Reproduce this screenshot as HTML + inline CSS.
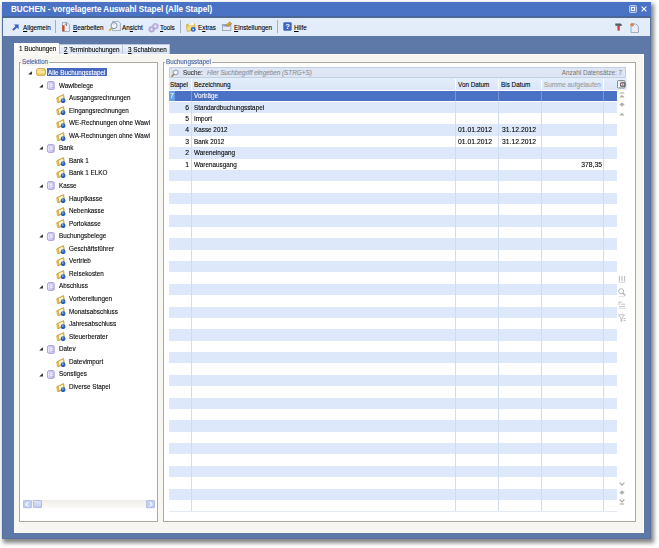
<!DOCTYPE html>
<html><head><meta charset="utf-8">
<style>
*{box-sizing:border-box;margin:0;padding:0}
html,body{width:659px;height:548px;overflow:hidden;background:#fff;font-family:"Liberation Sans",sans-serif;font-size:7px;line-height:8px;color:#000;position:relative}
.a{position:absolute}
svg.a{overflow:visible}
.t{white-space:nowrap;-webkit-text-stroke:0.1px currentColor;transform:scaleX(.905);transform-origin:0 0}
.tn{white-space:nowrap;-webkit-text-stroke:0.1px currentColor;transform:scaleX(.97);transform-origin:0 0}
.r{text-align:right;transform-origin:100% 0}
.tt{white-space:nowrap;font-size:8.5px;font-weight:bold;color:#fff;line-height:10px;transform:scaleX(.952);transform-origin:0 0}
u{text-decoration:underline;text-decoration-thickness:0.5px;text-underline-offset:1px}
#root{filter:blur(0.3px)}

</style></head><body>

<svg width="0" height="0" style="position:absolute">
<defs>
<symbol id="tri" viewBox="0 0 4 4"><path d="M3.9 0.2 L3.9 3.6 L0.3 3.6 Z" fill="#1e1e1e"/></symbol>
<symbol id="fold0" viewBox="0 0 10 8"><path d="M0.6 2.2 Q0.6 0.6 2.2 0.6 L7.8 0.6 Q9.4 0.6 9.4 2.2 L9.4 5.8 Q9.4 7.4 7.8 7.4 L2.2 7.4 Q0.6 7.4 0.6 5.8 Z" fill="#f2d36b" stroke="#c59d3c" stroke-width="0.8"/><path d="M1.6 3.4 L8.4 3.4 L8.4 4.6 L1.6 4.6 Z" fill="#fff4c0"/><path d="M1.6 1.8 L6 1.8" stroke="#fff4c0" stroke-width="0.8"/></symbol>
<symbol id="cat" viewBox="0 0 8 9"><path d="M0.6 1.4 Q0.6 0.5 3.9 0.5 Q7.2 0.5 7.2 1.4 L7.2 7.6 Q7.2 8.5 3.9 8.5 Q0.6 8.5 0.6 7.6 Z" fill="#cfcbf0" stroke="#9890d0" stroke-width="0.8"/><path d="M1.6 1.8 V7.2" stroke="#eeeaff" stroke-width="0.9"/><path d="M3 3.2 H5.4 M3 5.2 H5.4" stroke="#ffffff" stroke-width="0.9"/><path d="M5.8 6.2 L6.6 7.2" stroke="#8078c0" stroke-width="0.7"/></symbol>
<symbol id="leaf" viewBox="0 0 10 9"><path d="M1 3.6 L7.6 0.5 L8.6 6.2 L2.4 8.6 Z" fill="#e9c445" stroke="#b38a28" stroke-width="0.6"/><path d="M2.4 3.8 L6.8 1.8 L7.4 5.6 L3.2 7.4 Z" fill="#fdf6d8"/><path d="M0.6 4.2 L2.2 3.6 L3.2 8.6 L1.6 8.6 Z" fill="#f3d86a" stroke="#b38a28" stroke-width="0.5"/><circle cx="7.1" cy="6.7" r="2.4" fill="#2a60c6"/><circle cx="6.8" cy="6" r="0.8" fill="#a8c8f8"/></symbol>
<symbol id="restore" viewBox="0 0 8 8"><rect x="0.5" y="0.5" width="7" height="7" rx="1" fill="#6d8fd0" stroke="#c9d6f0" stroke-width="0.9"/><rect x="2.4" y="2.4" width="3.2" height="3" fill="none" stroke="#fff" stroke-width="0.9"/></symbol>
<symbol id="close" viewBox="0 0 6 6"><path d="M0.6 0.6 L5.4 5.4 M5.4 0.6 L0.6 5.4" stroke="#fff" stroke-width="1.05"/></symbol>
<symbol id="arrow" viewBox="0 0 7 7"><path d="M0.9 6.2 L4.6 2.5" stroke="#3561c2" stroke-width="1.9"/><path d="M1.9 0.5 L6.6 0.5 L6.6 5.2 Z" fill="#3561c2"/></symbol>
<symbol id="edit" viewBox="0 0 9 10"><path d="M1.5 0.6 L6.2 0.6 L8.4 2.8 L8.4 9.4 L1.5 9.4 Z" fill="#f4f6fb" stroke="#8e96a8" stroke-width="0.8"/><path d="M1.2 3.2 L3.6 3.2 L3.6 8.6 L2.4 9.8 L1.2 8.6 Z" fill="#d2462e"/><path d="M3.8 2.4 L5.6 1.6 L5.6 4" stroke="#444" stroke-width="0.7" fill="none"/></symbol>
<symbol id="view" viewBox="0 0 13 11"><path d="M4.5 0.5 L10.6 0.5 L12.4 2.3 L12.4 9.6 L4.5 9.6 Z" fill="#e6edf6" stroke="#93a3b8" stroke-width="0.8"/><circle cx="6" cy="4.6" r="3" fill="#f5f9ff" stroke="#7d8da6" stroke-width="1"/><path d="M3.8 7 L1.2 9.8" stroke="#c8a040" stroke-width="1.6"/><path d="M5 4.5 A1.2 1.2 0 0 1 6.2 3.3" stroke="#9db4d6" stroke-width="0.6" fill="none"/></symbol>
<symbol id="tools" viewBox="0 0 11 10"><circle cx="3.6" cy="6.3" r="2.8" fill="#c2b9e4" stroke="#9a90c8" stroke-width="0.7"/><circle cx="7.4" cy="3.3" r="2.8" fill="#cbc3ea" stroke="#9a90c8" stroke-width="0.7"/><circle cx="3.6" cy="6.3" r="0.9" fill="#efeafc"/><circle cx="7.4" cy="3.3" r="0.9" fill="#efeafc"/></symbol>
<symbol id="extras" viewBox="0 0 10 10"><path d="M0.5 2.6 L3.2 2 L4 2.8 L8.6 1.6 L9.2 7.4 L1.4 9.2 Z" fill="#e9c24a" stroke="#c19a34" stroke-width="0.5"/><path d="M2.6 2.6 L7.6 0.6 L8.4 5.6 L3.4 7.6 Z" fill="#fffdf2"/><path d="M0.4 4.2 L8 3.4 L9.2 7.6 L1.4 9.4 Z" fill="#f6de7c" stroke="#c19a34" stroke-width="0.5"/><circle cx="7.2" cy="7.4" r="2.4" fill="#2a62c8"/><circle cx="7.2" cy="7.4" r="0.9" fill="#c2dafc"/></symbol>
<symbol id="settings" viewBox="0 0 10 10"><rect x="0.5" y="3.4" width="8.4" height="6.2" fill="#e3eaf4" stroke="#8d9cb4" stroke-width="0.8"/><rect x="1.2" y="4.2" width="7" height="1.2" fill="#6f8fc4"/><path d="M3.6 4.4 L7.8 0.8 L9.6 2.6 L6 5.4 Z" fill="#d8a43a" stroke="#9b6f1e" stroke-width="0.5"/></symbol>
<symbol id="help" viewBox="0 0 9 9"><rect x="0.3" y="0.3" width="8.4" height="8.4" rx="1.2" fill="#3d63bf"/><text x="4.5" y="7.4" font-family="Liberation Sans" font-weight="bold" font-size="7.6" fill="#fff" text-anchor="middle">?</text></symbol>
<symbol id="hammer" viewBox="0 0 7 8"><path d="M0.2 0.6 L5.6 0.4 L6.8 1.4 L6.6 3 L0.4 2.8 Z" fill="#4f5f60"/><path d="M2.3 2.6 L4.9 2.6 L4.6 7.8 L2.6 7.8 Z" fill="#c8423e"/></symbol>
<symbol id="doc" viewBox="0 0 9 10"><path d="M1 1 L6 1 L8.4 3.4 L8.4 9.6 L1 9.6 Z" fill="#e8eef8" stroke="#8797b0" stroke-width="0.8"/><circle cx="2.2" cy="1.8" r="1.7" fill="#f07a2a"/></symbol>
<symbol id="sbl" viewBox="0 0 9 8.4"><rect x="0.4" y="0.4" width="8.2" height="7.6" rx="1" fill="#c3cef1" stroke="#a3b2e3" stroke-width="0.7"/><path d="M5.4 2 L3 4.2 L5.4 6.4" stroke="#fff" stroke-width="1.1" fill="none"/></symbol>
<symbol id="sbr" viewBox="0 0 9 8.4"><rect x="0.4" y="0.4" width="8.2" height="7.6" rx="1" fill="#c3cef1" stroke="#a3b2e3" stroke-width="0.7"/><path d="M3.6 2 L6 4.2 L3.6 6.4" stroke="#fff" stroke-width="1.1" fill="none"/></symbol>
<symbol id="search" viewBox="0 0 9 9"><circle cx="5.8" cy="4.4" r="2.4" fill="#f4f8ff" stroke="#7f8ea6" stroke-width="0.9"/><path d="M5 3.6 A1 1 0 0 1 6.2 2.8" stroke="#b9cbe6" stroke-width="0.6" fill="none"/><path d="M4 6.2 L1.6 8.6" stroke="#a7763a" stroke-width="1.5"/><path d="M1.2 1 L2.2 1 L2.2 6.5" stroke="#d8d0c4" stroke-width="0.8" fill="none"/></symbol>
<symbol id="colch" viewBox="0 0 9 9"><rect x="0.5" y="0.6" width="7.4" height="7.4" rx="0.8" fill="#e9efe9" stroke="#707676" stroke-width="0.9"/><path d="M1.4 1.6 V7.2" stroke="#fff" stroke-width="0.8"/><rect x="3" y="2.2" width="5.6" height="4.6" rx="1.6" fill="#505555"/><rect x="3.8" y="3.4" width="3.6" height="2" rx="0.6" fill="#f6e6ea"/><circle cx="5.6" cy="4.4" r="0.6" fill="#e07070"/></symbol>
<symbol id="nfirst" viewBox="0 0 6 6"><path d="M0.8 1 H5.2" stroke="#b8b4aa" stroke-width="1.2"/><path d="M0.4 5.6 L3 2.8 L5.6 5.6 Z" fill="#a9a9a6"/></symbol>
<symbol id="nprev10" viewBox="0 0 6 5"><path d="M3 0.3 L5.6 2.5 L3 4.7 L0.4 2.5 Z" fill="#b0b0ac"/></symbol>
<symbol id="nprev" viewBox="0 0 6 4"><path d="M0.4 3.6 L3 0.8 L5.6 3.6 Z" fill="#b0b0ac"/></symbol>
<symbol id="nnext" viewBox="0 0 6 4"><path d="M0.6 0.6 L3 3.2 L5.4 0.6" stroke="#a8a8a4" stroke-width="1.1" fill="none"/></symbol>
<symbol id="nnext10" viewBox="0 0 6 5"><path d="M3 0.3 L5.6 2.5 L3 4.7 L0.4 2.5 Z" fill="#b0b0ac"/></symbol>
<symbol id="nlast" viewBox="0 0 6 6"><path d="M0.6 0.6 L3 3 L5.4 0.6" stroke="#a8a8a4" stroke-width="1.1" fill="none"/><path d="M0.8 5 H5.2" stroke="#b8b4aa" stroke-width="1.2"/></symbol>
<symbol id="ncols" viewBox="0 0 8 8"><path d="M1.4 1 V6.4 M4 1 V6.4 M6.6 1 V6.4" stroke="#aeb0b2" stroke-width="0.9"/><path d="M0.4 7.6 H7.6" stroke="#c8ccd2" stroke-width="0.7"/></symbol>
<symbol id="nfind" viewBox="0 0 8 9"><circle cx="3.2" cy="3.2" r="2.5" fill="none" stroke="#aeb0b2" stroke-width="0.9"/><path d="M5 5 L7.4 7.6" stroke="#aeb0b2" stroke-width="1.3"/><path d="M0.4 8.6 H6.6" stroke="#c8ccd2" stroke-width="0.6"/></symbol>
<symbol id="ngroup" viewBox="0 0 8 8"><path d="M1 1 H4 M1 1 V4 M3 3.2 H7 M1 5.6 H7" stroke="#aeb0b2" stroke-width="0.8" fill="none"/><path d="M0.4 7.6 H7.6" stroke="#c8ccd2" stroke-width="0.6"/></symbol>
<symbol id="nfilter" viewBox="0 0 8 8"><path d="M0.5 0.8 H6.5 L4 4 V7 L3 7.6 V4 Z" fill="none" stroke="#aeb0b2" stroke-width="0.8"/><path d="M5.4 4.5 H7.6 M5.4 6.5 H7.6" stroke="#aeb0b2" stroke-width="0.8"/></symbol>
</defs></svg>

<div id="root" class="a" style="left:0;top:0;width:659px;height:548px">
<div class="a" style="left:1.50px;top:1.50px;width:649.80px;height:537.80px;background:#5e78a8;box-shadow:2px 3px 4px 1px rgba(60,60,60,.62);border:1px solid #56709f;border-top:none"></div>
<div class="a" style="left:1.50px;top:1.50px;width:649.80px;height:14.50px;background:#4a73c6;"></div>
<div class="a" style="left:1.50px;top:16.00px;width:649.80px;height:1.60px;background:#4d6698;"></div>
<div class="a" style="left:2.70px;top:17.60px;width:647.60px;height:18.10px;background:#e3edfa;"></div>
<div class="a tt" style="left:10.8px;top:3.9px">BUCHEN - vorgelagerte Auswahl Stapel (Alle Stapel)</div>
<svg class="a" style="left:628.50px;top:5.00px" width="8" height="8" viewBox="0 0 8 8"><use href="#restore"/></svg>
<svg class="a" style="left:640.50px;top:6.00px" width="6" height="6" viewBox="0 0 6 6"><use href="#close"/></svg>
<svg class="a" style="left:12.20px;top:24.20px" width="7" height="7" viewBox="0 0 7 7"><use href="#arrow"/></svg>
<div class="a t" style="left:23.00px;top:23.75px;"><u>A</u>llgemein</div>
<div class="a" style="left:55.00px;top:19.60px;width:1.00px;height:13.40px;background:#a3aec4;"></div>
<svg class="a" style="left:60.80px;top:21.80px" width="9" height="10" viewBox="0 0 9 10"><use href="#edit"/></svg>
<div class="a t" style="left:72.50px;top:23.75px;"><u>B</u>earbeiten</div>
<svg class="a" style="left:108.40px;top:21.20px" width="13" height="11" viewBox="0 0 13 11"><use href="#view"/></svg>
<div class="a t" style="left:122.00px;top:23.75px;">An<u>s</u>icht</div>
<svg class="a" style="left:148.20px;top:22.60px" width="11" height="10" viewBox="0 0 11 10"><use href="#tools"/></svg>
<div class="a t" style="left:160.30px;top:23.75px;"><u>T</u>ools</div>
<div class="a" style="left:180.00px;top:19.60px;width:1.00px;height:13.40px;background:#a3aec4;"></div>
<svg class="a" style="left:185.50px;top:21.60px" width="10" height="10" viewBox="0 0 10 10"><use href="#extras"/></svg>
<div class="a t" style="left:197.80px;top:23.75px;">E<u>x</u>tras</div>
<svg class="a" style="left:222.40px;top:21.40px" width="10" height="10" viewBox="0 0 10 10"><use href="#settings"/></svg>
<div class="a t" style="left:233.50px;top:23.75px;"><u>E</u>instellungen</div>
<div class="a" style="left:277.00px;top:19.60px;width:1.00px;height:13.40px;background:#a3aec4;"></div>
<svg class="a" style="left:282.90px;top:22.20px" width="9" height="9" viewBox="0 0 9 9"><use href="#help"/></svg>
<div class="a t" style="left:294.00px;top:23.75px;"><u>H</u>ilfe</div>
<svg class="a" style="left:614.60px;top:22.80px" width="7" height="8" viewBox="0 0 7 8"><use href="#hammer"/></svg>
<svg class="a" style="left:629.80px;top:22.60px" width="9" height="10" viewBox="0 0 9 10"><use href="#doc"/></svg>
<div class="a" style="left:13.70px;top:54.00px;width:630.30px;height:479.00px;background:#f7f6f1;border-top:1px solid #fff;border-right:1px solid #fff"></div>
<div class="a" style="left:13.70px;top:42.80px;width:45.30px;height:11.40px;background:linear-gradient(#ffffff,#f7f6f1);border-top:1px solid #fff"></div>
<div class="a" style="left:59.10px;top:43.50px;width:64.30px;height:10.20px;background:linear-gradient(#f0f4fb,#d9e3f4);border:1px solid #b9c5dc;border-bottom:none"></div>
<div class="a" style="left:123.40px;top:43.50px;width:46.20px;height:10.20px;background:linear-gradient(#f0f4fb,#d9e3f4);border:1px solid #b9c5dc;border-bottom:none;border-left:none"></div>
<div class="a t" style="left:19.20px;top:45.25px;">1 Buchungen</div>
<div class="a t" style="left:64.00px;top:45.85px;"><u>2</u> Terminbuchungen</div>
<div class="a t" style="left:127.80px;top:45.85px;"><u>3</u> Schablonen</div>
<div class="a" style="left:19.40px;top:62.00px;width:138.20px;height:459.90px;background:#fff;border:1px solid #a9a9a2"></div>
<div class="a t" style="left:20.90px;top:57.65px;background:#f7f6f1;padding:0 1px;color:#4060a8">Selektion</div>
<div class="a" style="left:163.20px;top:62.30px;width:472.40px;height:459.60px;background:#fff;border:1px solid #a9a9a2"></div>
<div class="a t" style="left:164.60px;top:58.35px;background:#f7f6f1;padding:0 1px;color:#4060a8">Buchungsstapel</div>
<svg class="a" style="left:28.30px;top:71.10px" width="4" height="4" viewBox="0 0 4 4"><use href="#tri"/></svg>
<svg class="a" style="left:35.50px;top:68.10px" width="10" height="8" viewBox="0 0 10 8"><use href="#fold0"/></svg>
<div class="a" style="left:47.00px;top:68.20px;width:60.00px;height:8.20px;background:#4669bd;"></div>
<div class="a t" style="left:48.20px;top:68.95px;color:#fff">Alle Buchungsstapel</div>
<svg class="a" style="left:38.60px;top:83.66px" width="4" height="4" viewBox="0 0 4 4"><use href="#tri"/></svg>
<svg class="a" style="left:47.00px;top:80.96px" width="8" height="9" viewBox="0 0 8 9"><use href="#cat"/></svg>
<div class="a t" style="left:58.80px;top:81.51px;">Wawibelege</div>
<svg class="a" style="left:56.00px;top:93.82px" width="10" height="9" viewBox="0 0 10 9"><use href="#leaf"/></svg>
<div class="a t" style="left:69.00px;top:94.07px;">Ausgangsrechnungen</div>
<svg class="a" style="left:56.00px;top:106.38px" width="10" height="9" viewBox="0 0 10 9"><use href="#leaf"/></svg>
<div class="a t" style="left:69.00px;top:106.63px;">Eingangsrechnungen</div>
<svg class="a" style="left:56.00px;top:118.94px" width="10" height="9" viewBox="0 0 10 9"><use href="#leaf"/></svg>
<div class="a t" style="left:69.00px;top:119.19px;">WE-Rechnungen ohne Wawi</div>
<svg class="a" style="left:56.00px;top:131.50px" width="10" height="9" viewBox="0 0 10 9"><use href="#leaf"/></svg>
<div class="a t" style="left:69.00px;top:131.75px;">WA-Rechnungen ohne Wawi</div>
<svg class="a" style="left:38.60px;top:146.46px" width="4" height="4" viewBox="0 0 4 4"><use href="#tri"/></svg>
<svg class="a" style="left:47.00px;top:143.76px" width="8" height="9" viewBox="0 0 8 9"><use href="#cat"/></svg>
<div class="a t" style="left:58.80px;top:144.31px;">Bank</div>
<svg class="a" style="left:56.00px;top:156.62px" width="10" height="9" viewBox="0 0 10 9"><use href="#leaf"/></svg>
<div class="a t" style="left:69.00px;top:156.87px;">Bank 1</div>
<svg class="a" style="left:56.00px;top:169.18px" width="10" height="9" viewBox="0 0 10 9"><use href="#leaf"/></svg>
<div class="a t" style="left:69.00px;top:169.43px;">Bank 1 ELKO</div>
<svg class="a" style="left:38.60px;top:184.14px" width="4" height="4" viewBox="0 0 4 4"><use href="#tri"/></svg>
<svg class="a" style="left:47.00px;top:181.44px" width="8" height="9" viewBox="0 0 8 9"><use href="#cat"/></svg>
<div class="a t" style="left:58.80px;top:181.99px;">Kasse</div>
<svg class="a" style="left:56.00px;top:194.30px" width="10" height="9" viewBox="0 0 10 9"><use href="#leaf"/></svg>
<div class="a t" style="left:69.00px;top:194.55px;">Hauptkasse</div>
<svg class="a" style="left:56.00px;top:206.86px" width="10" height="9" viewBox="0 0 10 9"><use href="#leaf"/></svg>
<div class="a t" style="left:69.00px;top:207.11px;">Nebenkasse</div>
<svg class="a" style="left:56.00px;top:219.42px" width="10" height="9" viewBox="0 0 10 9"><use href="#leaf"/></svg>
<div class="a t" style="left:69.00px;top:219.67px;">Portokasse</div>
<svg class="a" style="left:38.60px;top:234.38px" width="4" height="4" viewBox="0 0 4 4"><use href="#tri"/></svg>
<svg class="a" style="left:47.00px;top:231.68px" width="8" height="9" viewBox="0 0 8 9"><use href="#cat"/></svg>
<div class="a t" style="left:58.80px;top:232.23px;">Buchungsbelege</div>
<svg class="a" style="left:56.00px;top:244.54px" width="10" height="9" viewBox="0 0 10 9"><use href="#leaf"/></svg>
<div class="a t" style="left:69.00px;top:244.79px;">Geschäftsführer</div>
<svg class="a" style="left:56.00px;top:257.10px" width="10" height="9" viewBox="0 0 10 9"><use href="#leaf"/></svg>
<div class="a t" style="left:69.00px;top:257.35px;">Vertrieb</div>
<svg class="a" style="left:56.00px;top:269.66px" width="10" height="9" viewBox="0 0 10 9"><use href="#leaf"/></svg>
<div class="a t" style="left:69.00px;top:269.91px;">Reisekosten</div>
<svg class="a" style="left:38.60px;top:284.62px" width="4" height="4" viewBox="0 0 4 4"><use href="#tri"/></svg>
<svg class="a" style="left:47.00px;top:281.92px" width="8" height="9" viewBox="0 0 8 9"><use href="#cat"/></svg>
<div class="a t" style="left:58.80px;top:282.47px;">Abschluss</div>
<svg class="a" style="left:56.00px;top:294.78px" width="10" height="9" viewBox="0 0 10 9"><use href="#leaf"/></svg>
<div class="a t" style="left:69.00px;top:295.03px;">Vorbereitungen</div>
<svg class="a" style="left:56.00px;top:307.34px" width="10" height="9" viewBox="0 0 10 9"><use href="#leaf"/></svg>
<div class="a t" style="left:69.00px;top:307.59px;">Monatsabschluss</div>
<svg class="a" style="left:56.00px;top:319.90px" width="10" height="9" viewBox="0 0 10 9"><use href="#leaf"/></svg>
<div class="a t" style="left:69.00px;top:320.15px;">Jahresabschluss</div>
<svg class="a" style="left:56.00px;top:332.46px" width="10" height="9" viewBox="0 0 10 9"><use href="#leaf"/></svg>
<div class="a t" style="left:69.00px;top:332.71px;">Steuerberater</div>
<svg class="a" style="left:38.60px;top:347.42px" width="4" height="4" viewBox="0 0 4 4"><use href="#tri"/></svg>
<svg class="a" style="left:47.00px;top:344.72px" width="8" height="9" viewBox="0 0 8 9"><use href="#cat"/></svg>
<div class="a t" style="left:58.80px;top:345.27px;">Datev</div>
<svg class="a" style="left:56.00px;top:357.58px" width="10" height="9" viewBox="0 0 10 9"><use href="#leaf"/></svg>
<div class="a t" style="left:69.00px;top:357.83px;">Datevimport</div>
<svg class="a" style="left:38.60px;top:372.54px" width="4" height="4" viewBox="0 0 4 4"><use href="#tri"/></svg>
<svg class="a" style="left:47.00px;top:369.84px" width="8" height="9" viewBox="0 0 8 9"><use href="#cat"/></svg>
<div class="a t" style="left:58.80px;top:370.39px;">Sonstiges</div>
<svg class="a" style="left:56.00px;top:382.70px" width="10" height="9" viewBox="0 0 10 9"><use href="#leaf"/></svg>
<div class="a t" style="left:69.00px;top:382.95px;">Diverse Stapel</div>
<div class="a" style="left:23.30px;top:499.60px;width:131.70px;height:8.70px;background:linear-gradient(#efede7,#fbfaf7);"></div>
<svg class="a" style="left:23.30px;top:499.80px" width="9" height="8.4" viewBox="0 0 9 8.4"><use href="#sbl"/></svg>
<div class="a" style="left:32.60px;top:500.20px;width:9.00px;height:7.40px;background:linear-gradient(#dfe5f8,#c3cdef);border:1px solid #b0bce6;border-radius:1px"></div>
<svg class="a" style="left:146.00px;top:499.80px" width="9" height="8.4" viewBox="0 0 9 8.4"><use href="#sbr"/></svg>
<div class="a" style="left:168.80px;top:66.70px;width:456.90px;height:11.00px;background:#dee5f3;border:1px solid #c3cfe5"></div>
<svg class="a" style="left:170.40px;top:67.60px" width="9" height="9" viewBox="0 0 9 9"><use href="#search"/></svg>
<div class="a t" style="left:183.40px;top:68.85px;color:#333">Suche:</div>
<div class="a t" style="left:207.30px;top:68.85px;color:#8b909a;font-style:italic">Hier Suchbegriff eingeben (STRG+S)</div>
<div class="a t r" style="left:522.00px;width:100px;top:68.85px;color:#777;-webkit-text-stroke:0">Anzahl Datensätze: 7</div>
<div class="a" style="left:168.80px;top:77.70px;width:447.80px;height:12.60px;background:linear-gradient(#e4eefb,#dae6f8);"></div>
<div class="a" style="left:191.00px;top:78.50px;width:1.00px;height:11.50px;background:#fff;"></div>
<div class="a" style="left:455.00px;top:78.50px;width:1.00px;height:11.50px;background:#fff;"></div>
<div class="a" style="left:498.00px;top:78.50px;width:1.00px;height:11.50px;background:#fff;"></div>
<div class="a" style="left:541.00px;top:78.50px;width:1.00px;height:11.50px;background:#fff;"></div>
<div class="a" style="left:603.00px;top:78.50px;width:1.00px;height:11.50px;background:#fff;"></div>
<div class="a" style="left:168.80px;top:91.10px;width:447.80px;height:10.18px;background:#4a71c4;"></div>
<div class="a" style="left:168.80px;top:101.68px;width:447.80px;height:11.38px;background:#dde9fb;"></div>
<div class="a" style="left:168.80px;top:124.44px;width:447.80px;height:11.38px;background:#dde9fb;"></div>
<div class="a" style="left:168.80px;top:147.20px;width:447.80px;height:11.38px;background:#dde9fb;"></div>
<div class="a" style="left:168.80px;top:169.96px;width:447.80px;height:11.38px;background:#dde9fb;"></div>
<div class="a" style="left:168.80px;top:192.72px;width:447.80px;height:11.38px;background:#dde9fb;"></div>
<div class="a" style="left:168.80px;top:215.48px;width:447.80px;height:11.38px;background:#dde9fb;"></div>
<div class="a" style="left:168.80px;top:238.24px;width:447.80px;height:11.38px;background:#dde9fb;"></div>
<div class="a" style="left:168.80px;top:261.00px;width:447.80px;height:11.38px;background:#dde9fb;"></div>
<div class="a" style="left:168.80px;top:283.76px;width:447.80px;height:11.38px;background:#dde9fb;"></div>
<div class="a" style="left:168.80px;top:306.52px;width:447.80px;height:11.38px;background:#dde9fb;"></div>
<div class="a" style="left:168.80px;top:329.28px;width:447.80px;height:11.38px;background:#dde9fb;"></div>
<div class="a" style="left:168.80px;top:352.04px;width:447.80px;height:11.38px;background:#dde9fb;"></div>
<div class="a" style="left:168.80px;top:374.80px;width:447.80px;height:11.38px;background:#dde9fb;"></div>
<div class="a" style="left:168.80px;top:397.56px;width:447.80px;height:11.38px;background:#dde9fb;"></div>
<div class="a" style="left:168.80px;top:420.32px;width:447.80px;height:11.38px;background:#dde9fb;"></div>
<div class="a" style="left:168.80px;top:443.08px;width:447.80px;height:11.38px;background:#dde9fb;"></div>
<div class="a" style="left:168.80px;top:465.84px;width:447.80px;height:11.38px;background:#dde9fb;"></div>
<div class="a" style="left:168.80px;top:488.60px;width:447.80px;height:11.38px;background:#dde9fb;"></div>
<div class="a" style="left:168.80px;top:511.36px;width:447.80px;height:0.80px;background:#e3e9f2;"></div>
<div class="a" style="left:191.00px;top:90.30px;width:1.00px;height:421.06px;background:#d0dcf1;"></div>
<div class="a" style="left:455.00px;top:90.30px;width:1.00px;height:421.06px;background:#d0dcf1;"></div>
<div class="a" style="left:498.00px;top:90.30px;width:1.00px;height:421.06px;background:#d0dcf1;"></div>
<div class="a" style="left:541.00px;top:90.30px;width:1.00px;height:421.06px;background:#d0dcf1;"></div>
<div class="a" style="left:603.00px;top:90.30px;width:1.00px;height:421.06px;background:#d0dcf1;"></div>
<div class="a" style="left:168.80px;top:91.10px;width:447.80px;height:10.18px;background:#4a71c4;"></div>
<div class="a" style="left:191.00px;top:91.10px;width:1.00px;height:10.18px;background:#7896d6;"></div>
<div class="a" style="left:455.00px;top:91.10px;width:1.00px;height:10.18px;background:#7896d6;"></div>
<div class="a" style="left:498.00px;top:91.10px;width:1.00px;height:10.18px;background:#7896d6;"></div>
<div class="a" style="left:541.00px;top:91.10px;width:1.00px;height:10.18px;background:#7896d6;"></div>
<div class="a" style="left:603.00px;top:91.10px;width:1.00px;height:10.18px;background:#7896d6;"></div>
<div class="a" style="left:169.40px;top:91.10px;width:5.20px;height:10.18px;background:#66a2ea;"></div>
<div class="a t" style="left:169.90px;top:81.25px;">Stapel</div>
<div class="a t" style="left:194.00px;top:81.25px;">Bezeichnung</div>
<div class="a t" style="left:457.90px;top:81.25px;">Von Datum</div>
<div class="a t" style="left:501.00px;top:81.25px;">Bis Datum</div>
<div class="a t" style="left:544.20px;top:81.25px;color:#9a9a9a">Summe aufgelaufen</div>
<div class="a" style="left:616.60px;top:78.00px;width:10.40px;height:12.30px;background:#e4eefb;"></div>
<svg class="a" style="left:616.90px;top:80.40px" width="9" height="9" viewBox="0 0 9 9"><use href="#colch"/></svg>
<div class="a tn" style="left:169.60px;top:92.35px;color:#fff">7</div>
<div class="a t" style="left:194.30px;top:92.35px;color:#fff">Vorträge</div>
<div class="a tn r" style="left:89.00px;width:100px;top:103.73px;">6</div>
<div class="a t" style="left:194.30px;top:103.73px;">Standardbuchungsstapel</div>
<div class="a tn r" style="left:89.00px;width:100px;top:115.11px;">5</div>
<div class="a t" style="left:194.30px;top:115.11px;">Import</div>
<div class="a tn r" style="left:89.00px;width:100px;top:126.49px;">4</div>
<div class="a t" style="left:194.30px;top:126.49px;">Kasse 2012</div>
<div class="a tn" style="left:457.80px;top:126.49px;">01.01.2012</div>
<div class="a tn" style="left:501.50px;top:126.49px;">31.12.2012</div>
<div class="a tn r" style="left:89.00px;width:100px;top:137.87px;">3</div>
<div class="a t" style="left:194.30px;top:137.87px;">Bank 2012</div>
<div class="a tn" style="left:457.80px;top:137.87px;">01.01.2012</div>
<div class="a tn" style="left:501.50px;top:137.87px;">31.12.2012</div>
<div class="a tn r" style="left:89.00px;width:100px;top:149.25px;">2</div>
<div class="a t" style="left:194.30px;top:149.25px;">Wareneingang</div>
<div class="a tn r" style="left:89.00px;width:100px;top:160.63px;">1</div>
<div class="a t" style="left:194.30px;top:160.63px;">Warenausgang</div>
<div class="a tn r" style="left:501.80px;width:100px;top:160.63px;">378,35</div>
<svg class="a" style="left:619.00px;top:91.50px" width="6" height="6" viewBox="0 0 6 6"><use href="#nfirst"/></svg>
<svg class="a" style="left:619.00px;top:101.80px" width="6" height="5" viewBox="0 0 6 5"><use href="#nprev10"/></svg>
<svg class="a" style="left:619.00px;top:111.50px" width="6" height="4" viewBox="0 0 6 4"><use href="#nprev"/></svg>
<svg class="a" style="left:618.30px;top:275.00px" width="8" height="8" viewBox="0 0 8 8"><use href="#ncols"/></svg>
<svg class="a" style="left:618.30px;top:288.00px" width="8" height="9" viewBox="0 0 8 9"><use href="#nfind"/></svg>
<svg class="a" style="left:618.30px;top:301.00px" width="8" height="8" viewBox="0 0 8 8"><use href="#ngroup"/></svg>
<svg class="a" style="left:618.30px;top:314.00px" width="8" height="8" viewBox="0 0 8 8"><use href="#nfilter"/></svg>
<svg class="a" style="left:619.00px;top:481.80px" width="6" height="4" viewBox="0 0 6 4"><use href="#nnext"/></svg>
<svg class="a" style="left:619.00px;top:489.80px" width="6" height="5" viewBox="0 0 6 5"><use href="#nnext10"/></svg>
<svg class="a" style="left:619.00px;top:498.50px" width="6" height="6" viewBox="0 0 6 6"><use href="#nlast"/></svg>
</div>
</body></html>
